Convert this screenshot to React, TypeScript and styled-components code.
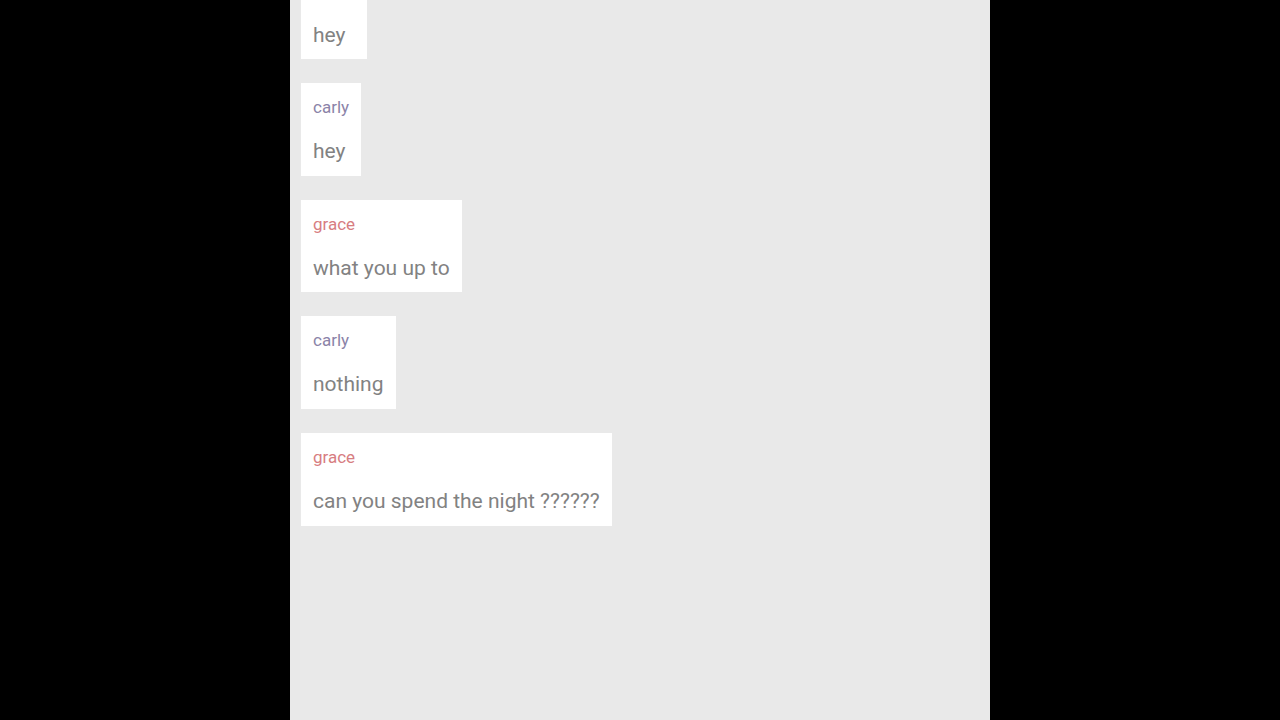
import React from "react";
import styled, { createGlobalStyle } from "styled-components";

const Global = createGlobalStyle`
  html, body { margin: 0; padding: 0; background: #000; height: 100%; overflow: hidden; }
  #root { height: 100%; }
`;

const Page = styled.div`
  display: flex;
  justify-content: center;
  height: 100vh;
  background: #000;
`;

const Panel = styled.main`
  width: 700px;
  height: 100%;
  background: #e9e9e9;
  overflow: hidden;
  font-family: Roboto, "Noto Sans", sans-serif;
`;

const List = styled.ul`
  list-style: none;
  margin: -33.5px 0 0 0;
  padding: 0 0 0 11px;
  display: flex;
  flex-direction: column;
  align-items: flex-start;
  gap: 24.17px;
`;

const Card = styled.li`
  background: #fff;
  padding: 12px 12px 12.5px 12px;
  display: flex;
  flex-direction: column;
  gap: 20px;
`;

const Name = styled.div<{ $color: string }>`
  font-size: 17px;
  line-height: 24px;
  color: ${(p) => p.$color};
`;

const Text = styled.div`
  font-size: 21px;
  line-height: 24px;
  color: #828282;
  white-space: nowrap;
`;

const colors: Record<string, string> = {
  grace: "#d77d81",
  carly: "#8b83a8",
};

const messages = [
  { from: "grace", text: "hey" },
  { from: "carly", text: "hey" },
  { from: "grace", text: "what you up to" },
  { from: "carly", text: "nothing" },
  { from: "grace", text: "can you spend the night ??????" },
];

export default function App() {
  return (
    <>
      <Global />
      <Page>
        <Panel>
          <List>
            {messages.map((m, i) => (
              <Card key={i}>
                <Name $color={colors[m.from]}>{m.from}</Name>
                <Text>{m.text}</Text>
              </Card>
            ))}
          </List>
        </Panel>
      </Page>
    </>
  );
}
